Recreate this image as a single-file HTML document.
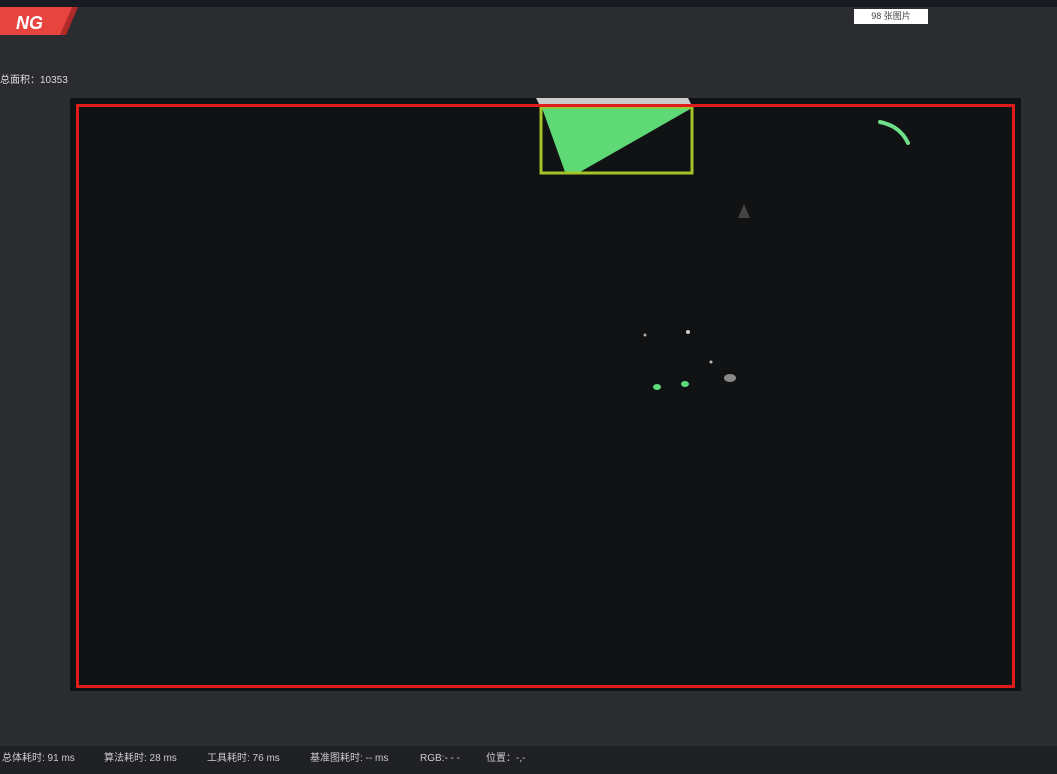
<!DOCTYPE html>
<html><head><meta charset="utf-8"><style>
body{margin:0;width:1057px;height:774px;background:#2b2c2f;position:relative;overflow:hidden;font-family:"Liberation Sans","Noto Sans CJK SC",sans-serif;color:#d8d8d8}
.abs{position:absolute}
.s{position:absolute;top:752px;font-size:10px;line-height:14px;color:#ccc;white-space:nowrap}
</style></head><body>
<div class="abs" style="left:0;top:0;width:1057px;height:7px;background:#181b22"></div>
<svg class="abs" style="left:0;top:7px" width="80" height="30"><polygon points="0,0 78,0 66,28 0,28" fill="#b02a2a"/><polygon points="0,0 72,0 60,28 0,28" fill="#e8443f"/><text x="16" y="22" font-family="Liberation Sans" font-weight="bold" font-style="italic" font-size="18" fill="#fff">NG</text></svg>
<div class="abs" style="left:0;top:74px;font-size:10px;line-height:14px;color:#ddd">总面积：10353</div>
<div class="abs" style="left:854px;top:9px;width:74px;height:15px;background:#fff;color:#444;font-size:9px;text-align:center;line-height:15px">98 张图片</div>
<div class="abs" style="left:70px;top:98px;width:951px;height:593px;background:#111213"></div>
<svg class="abs" style="left:0;top:0" width="1057" height="774">
<polygon points="536,98 688,98 692,106 540,106" fill="#ccc"/>
<polygon points="542,108 692,108 580,172 565,172" fill="#5fd876"/>
<rect x="541" y="107" width="151" height="66" fill="none" stroke="#a3c428" stroke-width="3"/>
<path d="M880 122 Q900 126 908 143" stroke="#6fe08a" stroke-width="4" fill="none" stroke-linecap="round"/>
<ellipse cx="657" cy="387" rx="4" ry="3" fill="#5fdc7a"/>
<ellipse cx="685" cy="384" rx="4" ry="3" fill="#5fdc7a"/>
<ellipse cx="730" cy="378" rx="6" ry="4" fill="#888"/>
<circle cx="688" cy="332" r="2" fill="#ccc"/><circle cx="645" cy="335" r="1.5" fill="#aaa"/><circle cx="711" cy="362" r="1.5" fill="#bbb"/>
<polygon points="738,218 744,204 750,218" fill="#444"/>
<rect x="77.5" y="105.5" width="936" height="581" fill="none" stroke="#e01b1b" stroke-width="3"/>
</svg>
<div class="abs" style="left:0;top:746px;width:1057px;height:28px;background:#1f2125"></div>
<div class="s" style="left:2px">总体耗时: 91 ms</div>
<div class="s" style="left:104px">算法耗时: 28 ms</div>
<div class="s" style="left:207px">工具耗时: 76 ms</div>
<div class="s" style="left:310px">基准图耗时: -- ms</div>
<div class="s" style="left:420px">RGB:- - -</div>
<div class="s" style="left:486px">位置：-,-</div>
</body></html>
